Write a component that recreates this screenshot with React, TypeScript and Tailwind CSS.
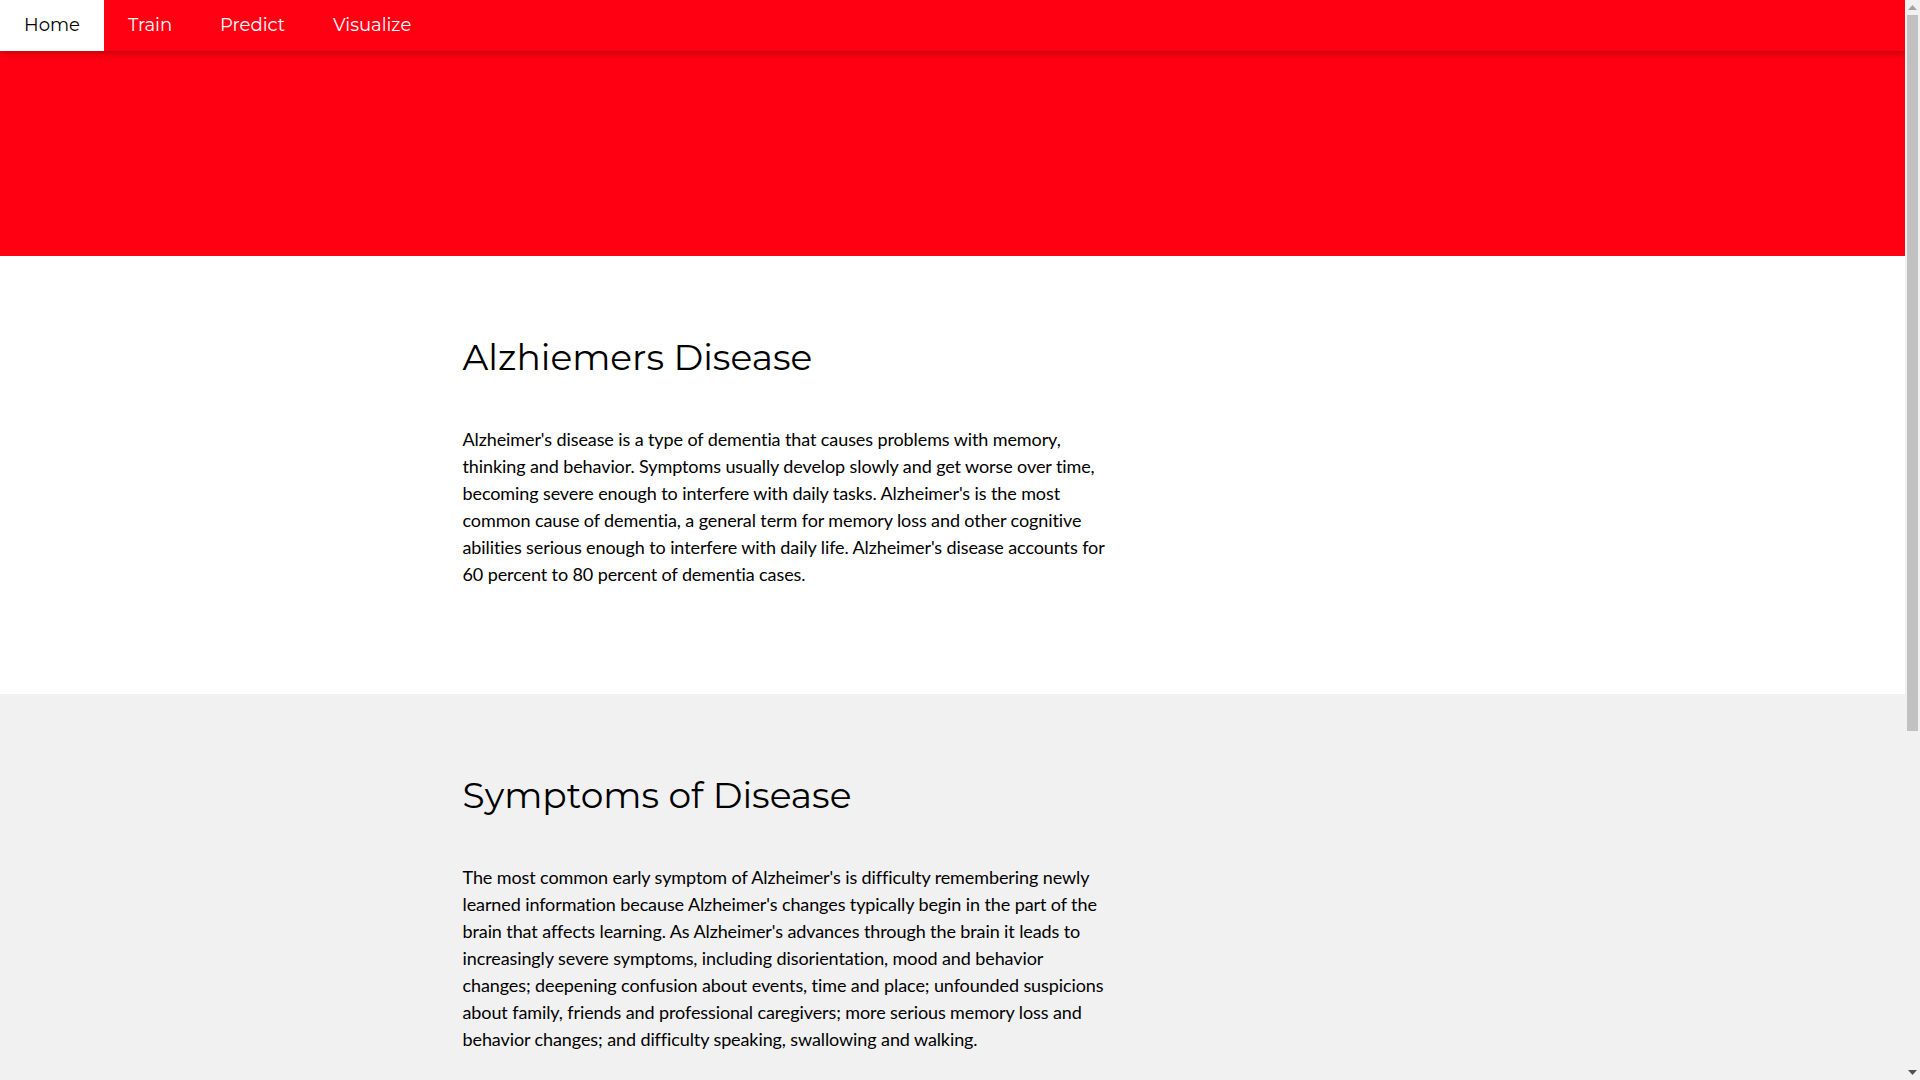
import React from "react";

const heading = "font-['Montserrat','Inter',sans-serif] text-[36px] leading-[1.5] font-normal text-black my-[10px]";
const para = "font-['Lato',sans-serif] text-[18px] leading-[1.5] font-normal text-black tracking-[-0.1px] [font-variant-ligatures:none] py-[32px] my-[10px]";

function Scrollbar() {
  return (
    <div className="w-[15px] shrink-0 h-full bg-[#f1f1f1] flex flex-col items-center">
      <div className="h-[15px] w-full flex items-center justify-center">
        <svg width="9" height="5" viewBox="0 0 9 5">
          <polygon points="4.5,0 9,5 0,5" fill="#a3a3a3" />
        </svg>
      </div>
      <div className="w-[11px] h-[716px] bg-[#c1c1c1]" />
      <div className="flex-1" />
      <div className="h-[15px] w-full flex items-center justify-center">
        <svg width="9" height="5" viewBox="0 0 9 5">
          <polygon points="0,0 9,0 4.5,5" fill="#505050" />
        </svg>
      </div>
    </div>
  );
}

export default function App() {
  return (
    <div className="h-screen flex overflow-hidden font-['Lato',sans-serif] text-[15px] leading-[1.5] text-black">
      <main className="flex-1 min-w-0 h-full overflow-hidden">
        <header className="bg-[#ff0013] h-[256px] flex flex-col">
          <nav className="relative z-10 flex bg-[#ff0013] font-['Montserrat','Inter',sans-serif] text-[18px] leading-[1.5] text-white shadow-[0_2px_5px_0_rgba(0,0,0,0.16),0_2px_10px_0_rgba(0,0,0,0.12)]">
            <a className="px-6 py-3 bg-white text-black">Home</a>
            <a className="px-6 py-3">Train</a>
            <a className="px-6 py-3">Predict</a>
            <a className="px-6 py-3">Visualize</a>
          </nav>
        </header>

        <section className="bg-white py-16 px-4">
          <div className="max-w-[980px] mx-auto">
            <div className="w-[645px]">
              <h1 className={heading}>Alzhiemers Disease</h1>
              <h5 className={para}>
                Alzheimer's disease is a type of dementia that causes problems with memory, thinking and behavior.
                Symptoms usually develop slowly and get worse over time, becoming severe enough to interfere with daily
                tasks. Alzheimer's is the most common cause of dementia, a general term for memory loss and other
                cognitive abilities serious enough to interfere with daily life. Alzheimer's disease accounts for 60
                percent to 80 percent of dementia cases.
              </h5>
            </div>
          </div>
        </section>

        <section className="bg-[#f1f1f1] py-16 px-4">
          <div className="max-w-[980px] mx-auto">
            <div className="w-[645px]">
              <h1 className={heading}>Symptoms of Disease</h1>
              <h5 className={para}>
                The most common early symptom of Alzheimer's is difficulty remembering newly learned information because
                Alzheimer's changes typically begin in the part of the brain that affects learning. As Alzheimer's
                advances through the brain it leads to increasingly severe symptoms, including disorientation, mood and
                behavior changes; deepening confusion about events, time and place; unfounded suspicions about family,
                friends and professional caregivers; more serious memory loss and behavior changes; and difficulty
                speaking, swallowing and walking.
              </h5>
            </div>
          </div>
        </section>
      </main>
      <Scrollbar />
    </div>
  );
}
